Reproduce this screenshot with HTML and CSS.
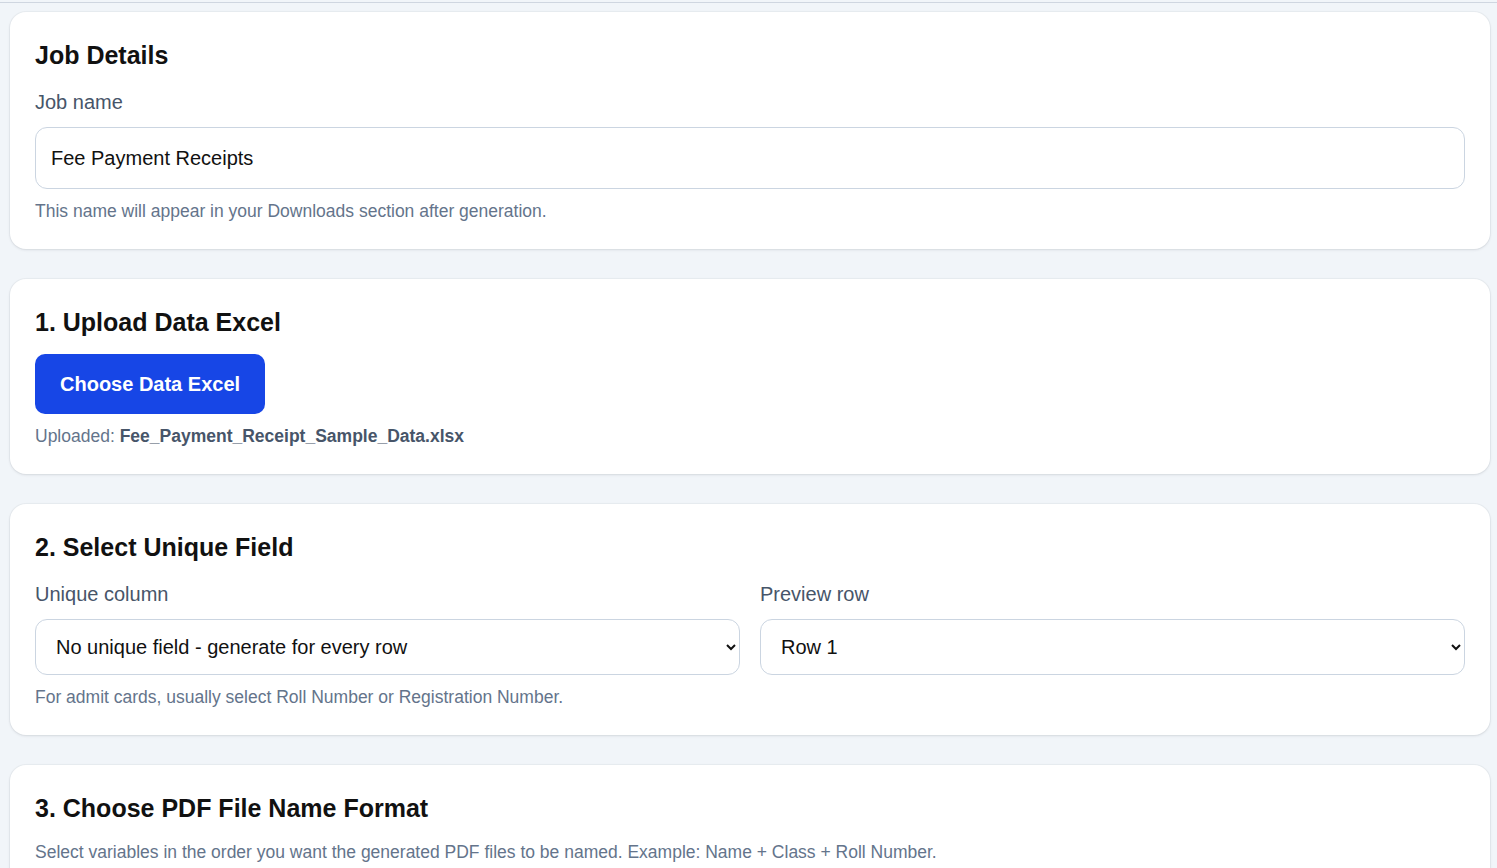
FILE: index.html
```html
<!DOCTYPE html>
<html lang="en">
<head>
<meta charset="utf-8">
<title>Job Details</title>
<link rel="stylesheet" href="styles.css">
</head>
<body>
<div class="topbar"></div>
<main class="page">
  <section class="card">
    <h2 class="card-title">Job Details</h2>
    <label class="field-label" for="jobname">Job name</label>
    <input class="text-input" id="jobname" type="text" value="Fee Payment Receipts">
    <p class="help">This name will appear in your Downloads section after generation.</p>
  </section>

  <section class="card">
    <h2 class="card-title">1. Upload Data Excel</h2>
    <div><button class="btn-primary" type="button">Choose Data Excel</button></div>
    <p class="help">Uploaded: <strong class="filename">Fee_Payment_Receipt_Sample_Data.xlsx</strong></p>
  </section>

  <section class="card">
    <h2 class="card-title">2. Select Unique Field</h2>
    <div class="two-col">
      <div class="col">
        <label class="field-label" for="uniq">Unique column</label>
        <select class="select" id="uniq">
          <option>No unique field - generate for every row</option>
        </select>
      </div>
      <div class="col">
        <label class="field-label" for="prev">Preview row</label>
        <select class="select" id="prev">
          <option>Row 1</option>
        </select>
      </div>
    </div>
    <p class="help">For admit cards, usually select Roll Number or Registration Number.</p>
  </section>

  <section class="card">
    <h2 class="card-title">3. Choose PDF File Name Format</h2>
    <p class="help help-tight">Select variables in the order you want the generated PDF files to be named. Example: Name + Class + Roll Number.</p>
  </section>
</main>
</body>
</html>
```

FILE: styles.css
```css
* {
  box-sizing: border-box;
}

html, body {
  margin: 0;
  padding: 0;
}

body {
  background: #f1f5f9;
  font-family: "Liberation Sans", Arial, sans-serif;
  color: #111827;
  overflow: hidden;
}

.topbar {
  height: 3px;
  border-bottom: 1px solid #cfd6e0;
}

.page {
  display: flex;
  flex-direction: column;
  gap: 30px;
  padding: 9px 7px 0 10px;
}

.card {
  background: #ffffff;
  border-radius: 16px;
  padding: 25px;
  box-shadow: 0 1px 3px rgba(15, 23, 42, 0.10), 0 0 0 1px rgba(15, 23, 42, 0.03);
}

.card-title {
  margin: 0 0 14px;
  font-size: 25px;
  line-height: 36px;
  font-weight: 700;
  color: #111111;
}

.field-label {
  display: block;
  font-size: 20px;
  line-height: 30px;
  color: #475569;
  margin-bottom: 10px;
}

.text-input {
  display: block;
  width: 100%;
  height: 62px;
  padding: 0 15px;
  border: 1px solid #cbd5e1;
  border-radius: 12px;
  font-family: inherit;
  font-size: 20px;
  color: #111111;
  background: #ffffff;
  outline: none;
}

.help {
  margin: 10px 0 0;
  font-size: 17.5px;
  line-height: 25px;
  color: #64748b;
}

.help-tight {
  margin-top: 0;
}

.filename {
  font-weight: 700;
  color: #475569;
}

.btn-primary {
  display: inline-block;
  height: 60px;
  padding: 0 25px;
  border: none;
  border-radius: 10px;
  background: #1746e6;
  color: #ffffff;
  font-family: inherit;
  font-size: 20px;
  font-weight: 700;
  cursor: pointer;
}

.two-col {
  display: grid;
  grid-template-columns: 1fr 1fr;
  gap: 20px;
}

.col {
  min-width: 0;
}

.select {
  display: block;
  width: 100%;
  height: 56px;
  padding: 0 10px 0 16px;
  border: 1px solid #cbd5e1;
  border-radius: 12px;
  background-color: #ffffff;
  font-family: inherit;
  font-size: 20px;
  color: #111111;
}
```
